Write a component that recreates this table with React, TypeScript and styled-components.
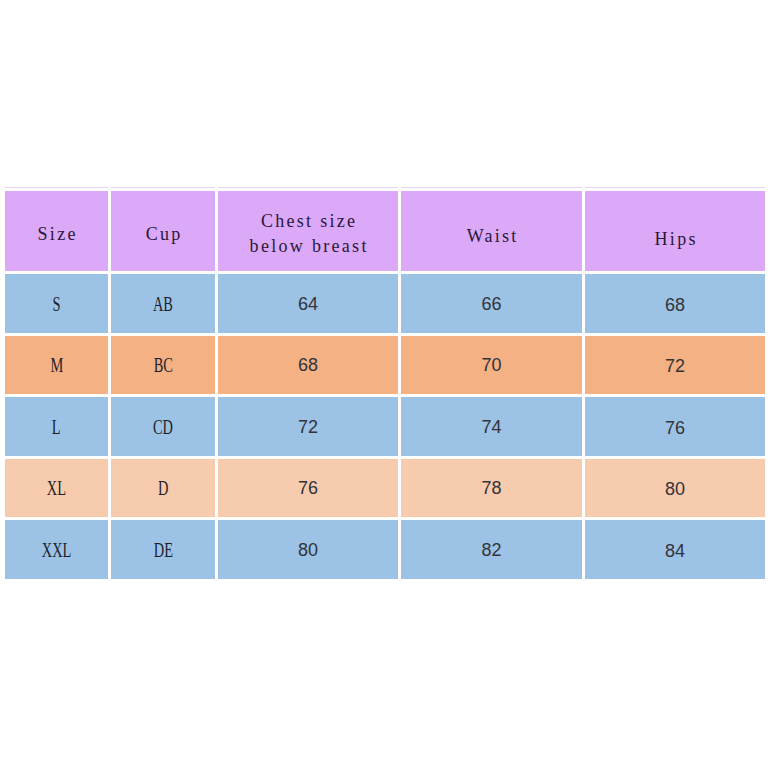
import React from "react";
import styled, { createGlobalStyle } from "styled-components";

type Row = {
    size: string;
    cup: string;
    chest: number;
    waist: number;
    hips: number;
    tone: "blue" | "orange" | "peach";
};

const rows: Row[] = [
    { size: "S", cup: "AB", chest: 64, waist: 66, hips: 68, tone: "blue" },
    { size: "M", cup: "BC", chest: 68, waist: 70, hips: 72, tone: "orange" },
    { size: "L", cup: "CD", chest: 72, waist: 74, hips: 76, tone: "blue" },
    { size: "XL", cup: "D", chest: 76, waist: 78, hips: 80, tone: "peach" },
    { size: "XXL", cup: "DE", chest: 80, waist: 82, hips: 84, tone: "blue" },
];

const tones = {
    head: "#dca8f8",
    blue: "#9cc2e5",
    orange: "#f3b184",
    peach: "#f7cbad",
};

const GlobalStyle = createGlobalStyle`
    html, body {
        margin: 0;
        padding: 0;
        background: #ffffff;
    }
`;

const Page = styled.div`
    width: 770px;
    height: 770px;
    background: #ffffff;
    padding: 187px 0 0 5px;
    box-sizing: border-box;
`;

const Grid = styled.div`
    display: grid;
    grid-template-columns: 103px 104px 180px 181px 180px;
    grid-template-rows: 1px 80px repeat(5, 58.5px);
    gap: 3px;
`;

const TopLine = styled.div`
    background: #ecd2f2;
`;

const Cell = styled.div<{ $tone: keyof typeof tones; $shift?: number }>`
    display: flex;
    align-items: center;
    justify-content: center;
    text-align: center;
    background: ${(p) => tones[p.$tone]};
    padding-top: ${(p) => p.$shift ?? 0}px;
    box-sizing: border-box;
`;

const HeadText = styled.span`
    font-family: "Liberation Serif", "DejaVu Serif", serif;
    font-size: 18px;
    letter-spacing: 2.3px;
    padding-left: 2.3px;
    line-height: 25px;
    color: #2a1838;
`;

const LabelText = styled.span`
    font-family: "Liberation Serif", "DejaVu Serif", serif;
    font-size: 20px;
    color: #1e1e2a;
    transform: scaleX(0.72);
`;

const NumText = styled.span`
    font-family: "Liberation Sans", Arial, sans-serif;
    font-size: 18px;
    color: #33333a;
`;

const App: React.FC = () => {
    return (
        <Page>
            <GlobalStyle />
            <Grid>
                {[0, 1, 2, 3, 4].map((i) => (
                    <TopLine key={`line-${i}`} />
                ))}
                <Cell $tone="head" $shift={6}>
                    <HeadText>Size</HeadText>
                </Cell>
                <Cell $tone="head" $shift={6}>
                    <HeadText>Cup</HeadText>
                </Cell>
                <Cell $tone="head" $shift={6}>
                    <HeadText>
                        Chest size
                        <br />
                        below breast
                    </HeadText>
                </Cell>
                <Cell $tone="head" $shift={10}>
                    <HeadText>Waist</HeadText>
                </Cell>
                <Cell $tone="head" $shift={16}>
                    <HeadText>Hips</HeadText>
                </Cell>
                {rows.map((r) => (
                    <React.Fragment key={r.size}>
                        <Cell $tone={r.tone} $shift={2}>
                            <LabelText>{r.size}</LabelText>
                        </Cell>
                        <Cell $tone={r.tone} $shift={2}>
                            <LabelText>{r.cup}</LabelText>
                        </Cell>
                        <Cell $tone={r.tone} $shift={2}>
                            <NumText>{r.chest}</NumText>
                        </Cell>
                        <Cell $tone={r.tone} $shift={2}>
                            <NumText>{r.waist}</NumText>
                        </Cell>
                        <Cell $tone={r.tone} $shift={4}>
                            <NumText>{r.hips}</NumText>
                        </Cell>
                    </React.Fragment>
                ))}
            </Grid>
        </Page>
    );
};

export default App;
